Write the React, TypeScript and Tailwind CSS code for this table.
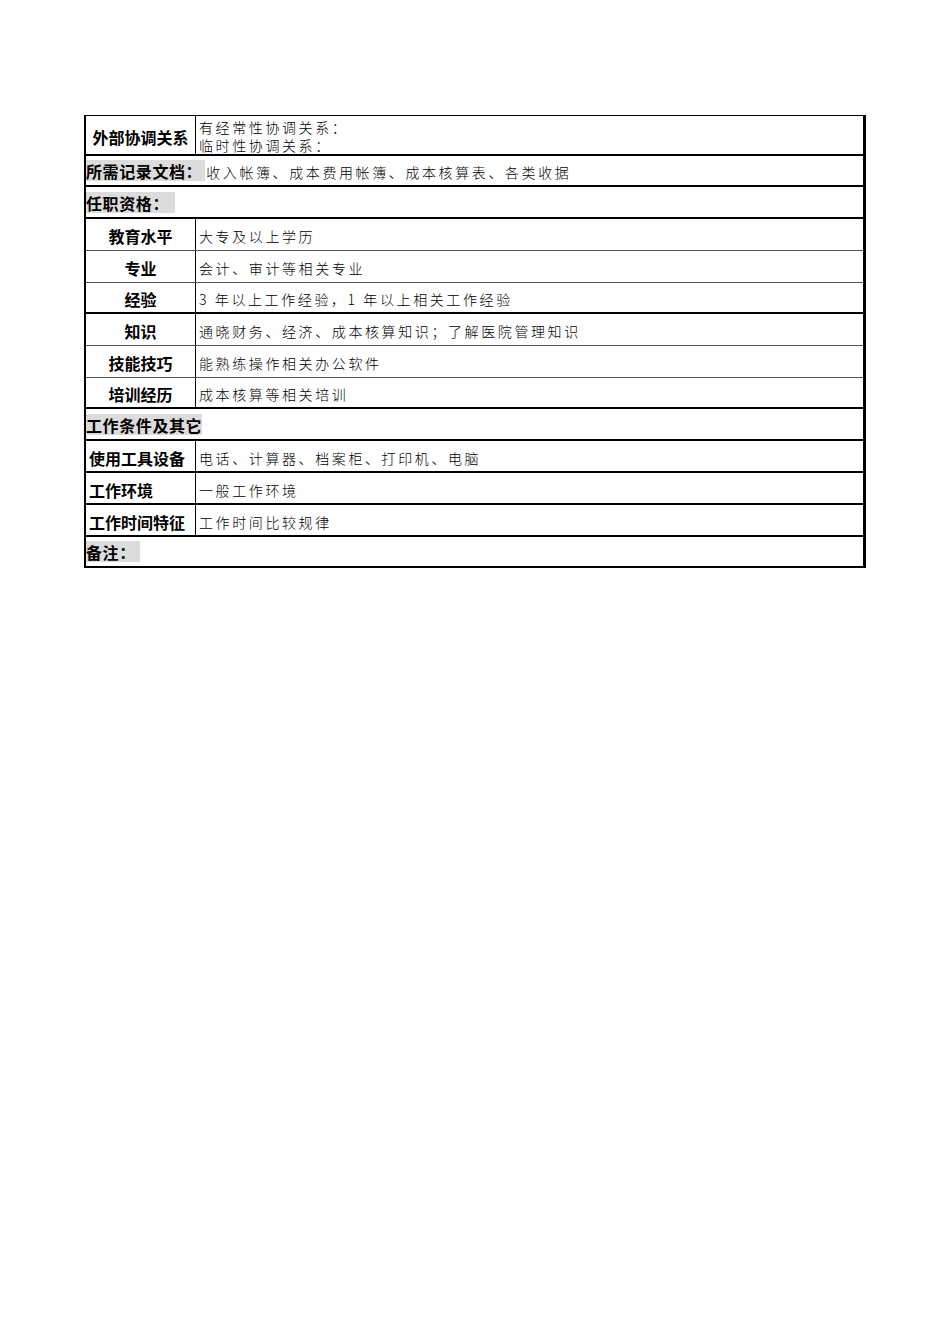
import React from "react";

const sans = { fontFamily: '"Noto Sans CJK SC", "Noto Sans", sans-serif' };

function Label({ children, center = false }: { children: React.ReactNode; center?: boolean }) {
  return (
    <div
      className={`w-[110px] shrink-0 border-r border-black flex items-center text-[16px] font-bold leading-none text-black ${center ? "justify-center" : "pl-[3px]"}`}
    >
      <span className="pt-[3px]">{children}</span>
    </div>
  );
}

function Value({ children }: { children: React.ReactNode }) {
  return (
    <div className="flex-1 flex items-center pl-[3px] text-[14px] font-light tracking-[2.6px] leading-none text-black">
      <span className="pt-[3px]">{children}</span>
    </div>
  );
}

function Row({
  h,
  thick = true,
  last = false,
  children,
}: {
  h: string;
  thick?: boolean;
  last?: boolean;
  children: React.ReactNode;
}) {
  const border = last ? "" : thick ? "border-b-2 border-black" : "border-b border-[#555]";
  return <div className={`flex ${h} ${border}`}>{children}</div>;
}

export default function App() {
  return (
    <div className="w-[950px] h-[1344px] bg-white" style={sans}>
      <div className="pt-[115px] pl-[84px]">
        <div className="w-[782px] border-t border-[#333] border-l-2 border-r-[3px] border-b-2 border-black flex flex-col">
          <Row h="h-[40px]">
            <Label center>外部协调关系</Label>
            <div className="flex-1 flex flex-col justify-center pl-[3px] pt-[1px] text-[14px] font-light tracking-[2.6px] leading-[18px] text-black">
              <span>有经常性协调关系：</span>
              <span>临时性协调关系：</span>
            </div>
          </Row>
          <Row h="h-[31px]">
            <div className="flex items-center">
              <span className="bg-[#dcdcdc] text-[16px] font-bold tracking-[0.6px] leading-[20px] pr-[3px] pt-[1px]">所需记录文档：</span>
              <span className="text-[14px] font-light tracking-[2.6px] leading-none text-black pl-[1px] pt-[2px]">
                收入帐簿、成本费用帐簿、成本核算表、各类收据
              </span>
            </div>
          </Row>
          <Row h="h-[32px]">
            <div className="flex items-center">
              <span className="bg-[#dcdcdc] text-[16px] font-bold tracking-[0.6px] leading-[20px] pr-[6px] pt-[1px]">任职资格：</span>
            </div>
          </Row>
          <Row h="h-[32px]" thick={false}>
            <Label center>教育水平</Label>
            <Value>大专及以上学历</Value>
          </Row>
          <Row h="h-[32px]" thick={false}>
            <Label center>专业</Label>
            <Value>会计、审计等相关专业</Value>
          </Row>
          <Row h="h-[31px]">
            <Label center>经验</Label>
            <Value>3 年以上工作经验，1 年以上相关工作经验</Value>
          </Row>
          <Row h="h-[32px]" thick={false}>
            <Label center>知识</Label>
            <Value>通晓财务、经济、成本核算知识；了解医院管理知识</Value>
          </Row>
          <Row h="h-[32px]" thick={false}>
            <Label center>技能技巧</Label>
            <Value>能熟练操作相关办公软件</Value>
          </Row>
          <Row h="h-[31px]">
            <Label center>培训经历</Label>
            <Value>成本核算等相关培训</Value>
          </Row>
          <Row h="h-[32px]">
            <div className="flex items-center">
              <span className="bg-[#dcdcdc] text-[16px] font-bold tracking-[0.6px] leading-[20px] pt-[1px]">工作条件及其它</span>
            </div>
          </Row>
          <Row h="h-[32px]">
            <Label>使用工具设备</Label>
            <Value>电话、计算器、档案柜、打印机、电脑</Value>
          </Row>
          <Row h="h-[32px]">
            <Label>工作环境</Label>
            <Value>一般工作环境</Value>
          </Row>
          <Row h="h-[32px]">
            <Label>工作时间特征</Label>
            <Value>工作时间比较规律</Value>
          </Row>
          <Row h="h-[29px]" last>
            <div className="flex items-center">
              <span className="bg-[#dcdcdc] text-[16px] font-bold tracking-[0.6px] leading-[20px] pr-[4px] pt-[1px]">备注：</span>
            </div>
          </Row>
        </div>
      </div>
    </div>
  );
}
